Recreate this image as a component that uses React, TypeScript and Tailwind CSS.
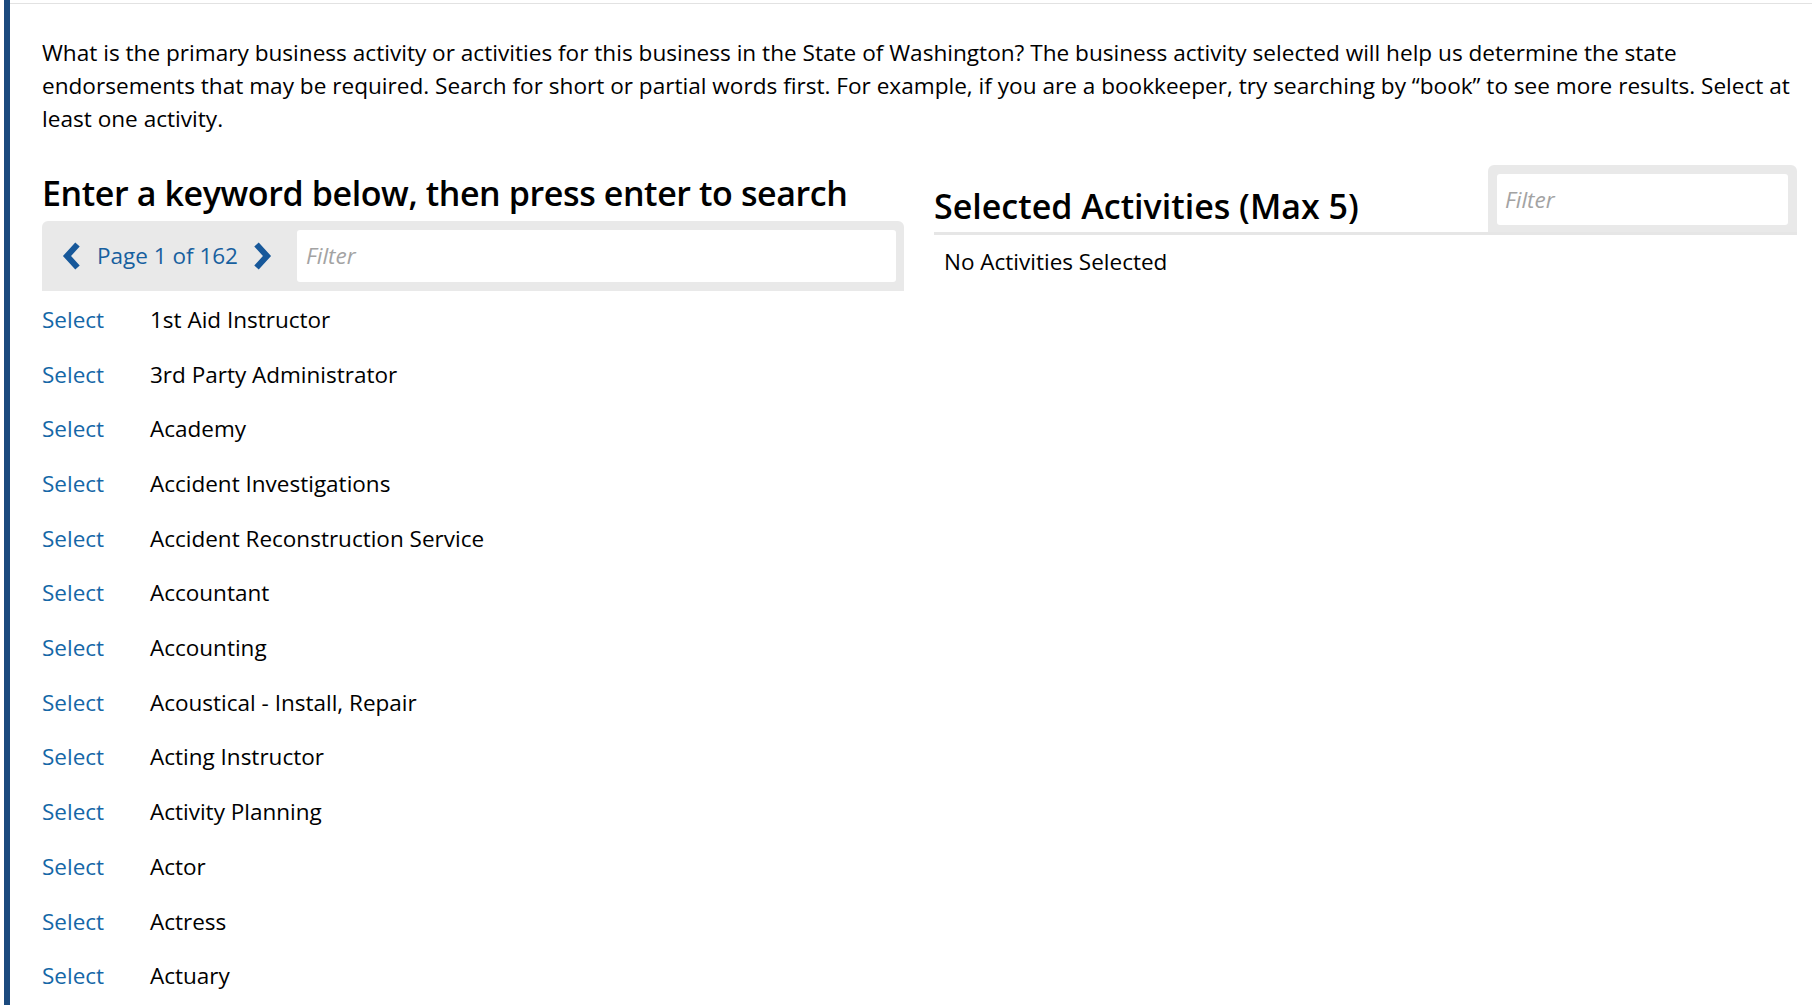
import { useState } from "react";

const activities = [
  "1st Aid Instructor",
  "3rd Party Administrator",
  "Academy",
  "Accident Investigations",
  "Accident Reconstruction Service",
  "Accountant",
  "Accounting",
  "Acoustical - Install, Repair",
  "Acting Instructor",
  "Activity Planning",
  "Actor",
  "Actress",
  "Actuary",
];

function Chevron({ dir }: { dir: "left" | "right" }) {
  return (
    <svg width="20" height="28" viewBox="0 0 20 28" className="shrink-0">
      <path
        d={dir === "left" ? "M16.5 2.5 L6 14 L16.5 25.5" : "M3.5 2.5 L14 14 L3.5 25.5"}
        fill="none"
        stroke="#17589a"
        strokeWidth="6"
        strokeLinejoin="miter"
      />
    </svg>
  );
}

export default function App() {
  const [filter, setFilter] = useState("");
  const [selectedFilter, setSelectedFilter] = useState("");

  return (
    <div className="w-[1812px] h-[1005px] bg-white overflow-hidden font-['Open_Sans','Liberation_Sans',sans-serif] text-black">
      <div className="flex h-full">
        {/* left accent bar */}
        <div className="w-[6px] ml-[4px] bg-[#1b4a7e] shrink-0" />

        <div className="flex-1 flex flex-col">
          <div className="mt-[3px] border-t border-[#e2e2e2] pl-[32px] pr-[15px] pt-[31.5px]">
            <p className="text-[22.6px] leading-[33px]">
              What is the primary business activity or activities for this business in the State of Washington? The
              business activity selected will help us determine the state
              <br />
              endorsements that may be required. Search for short or partial words first. For example, if you are a
              bookkeeper, try searching by “book” to see more results. Select at
              <br />
              least one activity.
            </p>

            <div className="flex gap-[30px] mt-[38px]">
              {/* search column */}
              <div className="w-[862px] shrink-0">
                <h2 className="text-[34px] leading-[40px] font-semibold tracking-[-0.4px]">
                  Enter a keyword below, then press enter to search
                </h2>
                <div className="mt-[8px] h-[70px] bg-[#e9e9e9] rounded-t-[6px] flex items-center pl-[19px] pr-[8px]">
                  <button className="flex items-center">
                    <Chevron dir="left" />
                  </button>
                  <span className="ml-[16px] text-[22.5px] text-[#17609f]">Page 1 of 162</span>
                  <button className="ml-[15px] flex items-center">
                    <Chevron dir="right" />
                  </button>
                  <input
                    value={filter}
                    onChange={(e) => setFilter(e.target.value)}
                    placeholder="Filter"
                    className="ml-[24px] flex-1 h-[52px] bg-white rounded-[3px] px-[9px] text-[22.5px] outline-none placeholder:italic placeholder:text-[#a3a3a3]"
                  />
                </div>

                <ul className="pt-[2px]">
                  {activities.map((a) => (
                    <li key={a} className="h-[54.7px] flex items-center text-[22.5px]">
                      <a href="#" className="w-[108px] text-[#1567a7]">
                        Select
                      </a>
                      <span>{a}</span>
                    </li>
                  ))}
                </ul>
              </div>

              {/* selected column */}
              <div className="flex-1">
                <div className="flex items-end justify-between border-b-[3px] border-[#e6e6e6] mt-[-8px]">
                  <h2 className="text-[34px] leading-[40px] font-semibold tracking-[0px] pb-[6px]">
                    Selected Activities (Max 5)
                  </h2>
                  <div className="w-[309px] h-[67px] bg-[#e9e9e9] rounded-t-[6px] px-[9px] pt-[9px]">
                    <input
                      value={selectedFilter}
                      onChange={(e) => setSelectedFilter(e.target.value)}
                      placeholder="Filter"
                      className="w-full h-[51px] bg-white rounded-[3px] px-[8px] text-[22.5px] outline-none placeholder:italic placeholder:text-[#a3a3a3]"
                    />
                  </div>
                </div>
                <p className="text-[22.5px] leading-[33px] mt-[10px] pl-[10px]">No Activities Selected</p>
              </div>
            </div>
          </div>
        </div>
      </div>
    </div>
  );
}
